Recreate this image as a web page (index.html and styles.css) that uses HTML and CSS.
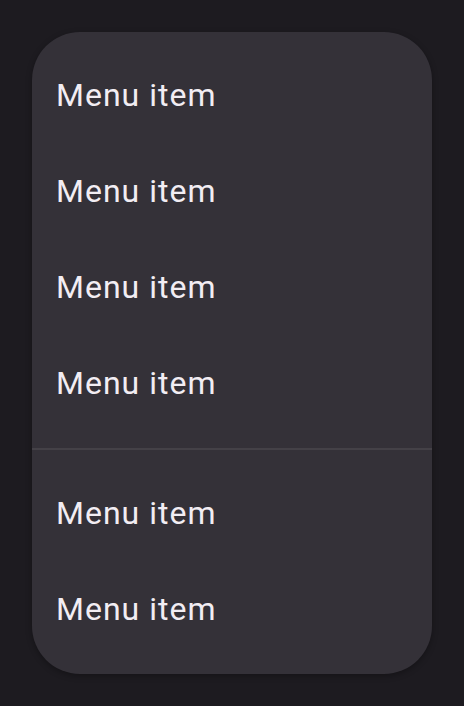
FILE: index.html
```html
<!DOCTYPE html>
<html lang="en">
<head>
    <meta charset="UTF-8">
    <meta name="viewport" content="width=device-width, initial-scale=1.0">
    <title>Menu</title>
    <link rel="stylesheet" href="styles.css">
</head>
<body>
<div class="menu">
    <div class="menu-item">Menu item</div>
    <div class="menu-item">Menu item</div>
    <div class="menu-item">Menu item</div>
    <div class="menu-item">Menu item</div>
    <div class="divider"></div>
    <div class="menu-item">Menu item</div>
    <div class="menu-item">Menu item</div>
</div>
</body>
</html>
```

FILE: styles.css
```css
* {
    margin: 0;
    padding: 0;
    box-sizing: border-box;
}

body {
    font-family: Roboto, "Liberation Sans", sans-serif;
    background: #1d1b20;
    color: #f2edf3;
    padding: 32px;
    height: 100vh;
}

/* Menu card */
.menu {
    background: #343138;
    border-radius: 48px;
    width: 400px;
    padding: 16px 0;
    box-shadow: 0px 2px 6px rgba(0, 0, 0, 0.3);
}

.menu-item {
    height: 96px;
    display: flex;
    align-items: center;
    padding: 0 24px 3px;
    font-size: 32px;
    letter-spacing: 1px;
}

.divider {
    height: 2px;
    margin: 16px 0;
    background: #444147;
}
```
